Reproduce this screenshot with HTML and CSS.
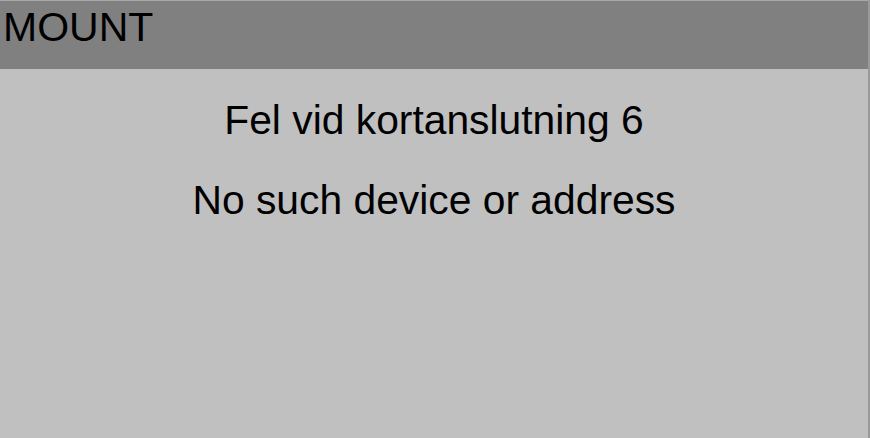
FILE: index.html
```html
<!DOCTYPE html>
<html>
<head>
<meta charset="utf-8">
<link rel="stylesheet" href="styles.css">
</head>
<body>
<div class="screen">
  <div class="header">MOUNT</div>
  <div class="content">
    <div class="line">Fel vid kortanslutning 6</div>
    <div class="line">No such device or address</div>
  </div>
</div>
</body>
</html>
```

FILE: styles.css
```css
html, body {
  margin: 0;
  padding: 0;
}
body {
  width: 870px;
  height: 438px;
  overflow: hidden;
  font-family: "Liberation Sans", Arial, sans-serif;
  color: #000;
  background: #c0c0c0;
}
.screen {
  width: 870px;
  height: 438px;
  box-sizing: border-box;
  border-right: 2px solid #9a9a9a;
  background: #c0c0c0;
  display: flex;
  flex-direction: column;
}
.header {
  height: 69px;
  box-sizing: border-box;
  border-top: 1px solid #a8a8a8;
  background: #808080;
  font-size: 41px;
  line-height: 47px;
  padding: 3px 0 0 3px;
}
.content {
  padding-top: 11px;
  display: flex;
  flex-direction: column;
  align-items: center;
  font-size: 40.8px;
  line-height: 80px;
}
.line {
  text-align: center;
}
```
